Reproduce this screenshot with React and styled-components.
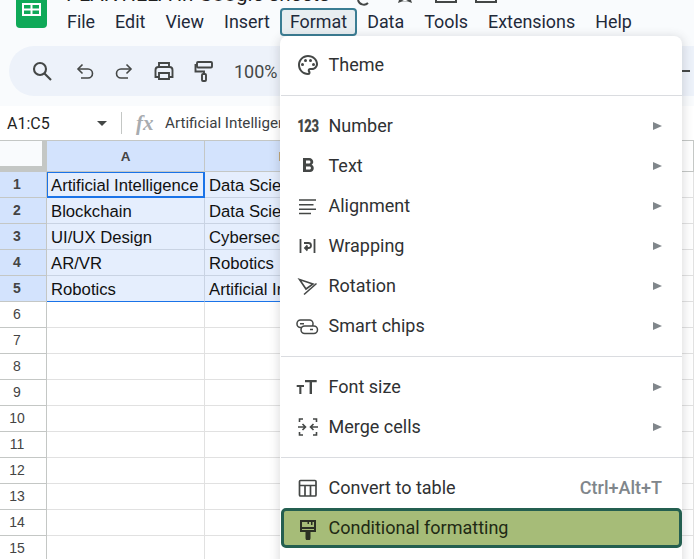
import React from "react";
import styled, { createGlobalStyle } from "styled-components";
import {
  MdOutlinePalette,
  MdFormatBold,
  MdArrowDropDown,
} from "react-icons/md";

const GlobalStyle = createGlobalStyle`
  html, body {
    margin: 0;
    padding: 0;
    background: #fff;
  }
  body {
    font-family: Roboto, "Liberation Sans", sans-serif;
  }
`;

const Page = styled.div`
  position: relative;
  width: 694px;
  height: 559px;
  overflow: hidden;
  background: #fff;
`;

const Header = styled.header`
  height: 46px;
  background: #f9fbfd;
  display: flex;
  padding-left: 16px;
  overflow: hidden;
`;

const Logo = styled.svg`
  width: 31px;
  height: 28px;
  flex: none;
`;

const TitleColumn = styled.div`
  margin-left: 19px;
  display: flex;
  flex-direction: column;
  flex: 1;
`;

const TitleRow = styled.div`
  display: flex;
  align-items: flex-end;
  height: 6px;
  overflow: hidden;
`;

const DocTitle = styled.div`
  flex: none;
  font-size: 20.6px;
  line-height: 28px;
  margin-bottom: -2px;
  color: #1f1f1f;
  white-space: nowrap;
`;

const TitleIcons = styled.svg`
  flex: none;
  width: 160px;
  height: 6px;
  margin-left: 26px;
`;

const MenuBar = styled.nav`
  display: flex;
  height: 28px;
  margin-top: 2px;
  margin-left: -9px;
  align-items: center;
`;

const MenuLabel = styled.div`
  box-sizing: border-box;
  height: 28px;
  line-height: ${(p) => (p.$active ? "24px" : "28px")};
  font-size: 17.9px;
  color: #1f2a3a;
  padding: 0 ${(p) => (p.$active ? "8px" : "10px")};
  white-space: nowrap;
  ${(p) =>
    p.$active &&
    `
    background: #e8eef1;
    border: 2px solid #3a7d93;
    border-radius: 4px;
  `}
`;

const ToolbarBand = styled.div`
  height: 60px;
  background: #f9fbfd;
  padding-left: 9px;
`;

const Toolbar = styled.div`
  height: 50px;
  background: #edf2fa;
  border-radius: 25px 0 0 25px;
  display: flex;
  align-items: center;
  color: #444746;
  padding-left: 21px;
  position: relative;
`;

const ToolIcon = styled.span`
  display: flex;
  width: 24px;
  justify-content: center;
  margin-right: ${(p) => p.$gap}px;
`;

const Zoom = styled.span`
  font-size: 18px;
  color: #444746;
  flex: 1;
`;

const Dash = styled.span`
  width: 8px;
  height: 2px;
  background: #444746;
  margin-right: 4px;
`;

const FormulaBar = styled.div`
  height: 34px;
  display: flex;
  align-items: center;
  background: #fff;
  padding-left: 7px;
  color: #444746;
  border-bottom: 1px solid #c4c7c5;
`;

const NameBox = styled.div`
  width: 83px;
  font-size: 16px;
  color: #1f1f1f;
`;

const NameCaret = styled.span`
  display: flex;
  font-size: 24px;
  width: 24px;
  color: #444746;
  margin-right: 7px;
`;

const Separator = styled.div`
  width: 1px;
  height: 22px;
  background: #c4c7c5;
  margin-right: 14px;
`;

const Fx = styled.span`
  font-family: "Liberation Serif", serif;
  font-style: italic;
  font-weight: 700;
  font-size: 21px;
  color: #a8acb0;
  width: 29px;
`;

const FormulaText = styled.span`
  font-size: 15.2px;
  color: #3c4043;
  white-space: nowrap;
`;

const GridRow = styled.div`
  display: grid;
  grid-template-columns: 47px 158px 158px 158px 1fr;
  height: ${(p) => p.$height || 26}px;
  box-sizing: border-box;
`;

const Corner = styled.div`
  box-sizing: border-box;
  background: #f9fbfd;
  border-right: 5px solid #c4c7c5;
  border-bottom: 6px solid #c4c7c5;
`;

const ColHead = styled.div`
  box-sizing: border-box;
  display: flex;
  align-items: center;
  justify-content: center;
  font-family: "Liberation Sans", sans-serif;
  font-size: 13.5px;
  font-weight: 700;
  color: #444;
  background: ${(p) => (p.$selected ? "#d3e3fd" : "#fff")};
  border-right: 1px solid #c4c7c5;
  border-bottom: 1px solid #c4c7c5;
`;

const RowHead = styled.div`
  box-sizing: border-box;
  font-family: "Liberation Sans", sans-serif;
  font-size: 14px;
  font-weight: ${(p) => (p.$selected ? 700 : 400)};
  line-height: 25px;
  color: #444;
  padding-right: 12px;
  text-align: center;
  background: ${(p) => (p.$selected ? "#d3e3fd" : "#fff")};
  border-right: 1px solid #c4c7c5;
  border-bottom: 1px solid #c4c7c5;
`;

const Cell = styled.div`
  box-sizing: border-box;
  font-family: "Liberation Sans", sans-serif;
  font-size: 16.7px;
  line-height: 27px;
  padding-left: 4px;
  color: #111;
  white-space: nowrap;
  overflow: hidden;
  background: ${(p) => (p.$selected ? "#e5eefd" : "#fff")};
  border-right: 1px solid ${(p) => (p.$selected ? "#c9d3e3" : "#e1e1e1")};
  border-bottom: 1px solid ${(p) => (p.$selected ? "#c9d3e3" : "#e1e1e1")};
  ${(p) => p.$last && "border-bottom: 1px solid #1a73e8;"}
  ${(p) =>
    p.$active &&
    `
    border: 1px solid #1a73e8;
    border-width: 1px 2px 2px 1px;
    padding-left: 3px;
    line-height: 25px;
  `}
`;

const Menu = styled.div`
  position: absolute;
  left: 280px;
  top: 36px;
  width: 402px;
  height: 540px;
  box-sizing: border-box;
  padding-top: 9px;
  background: #fff;
  border-radius: 8px;
  box-shadow: 0 2px 10px 2px rgba(60, 64, 67, 0.16);
`;

const Item = styled.div`
  box-sizing: border-box;
  display: flex;
  align-items: center;
  height: 40px;
  margin-left: 1px;
  padding: 0 20px 0 15px;
  font-size: 18px;
  color: #2f3133;
  ${(p) =>
    p.$highlight &&
    `
    background: #a6bc78;
    border: 3px solid #245f50;
    border-radius: 5px;
    padding: 0 17px 0 12px;
    color: #1f2a14;
  `}
`;

const ItemIcon = styled.span`
  width: 24px;
  height: 24px;
  display: flex;
  align-items: center;
  justify-content: center;
  margin-right: 8.5px;
  font-size: 24px;
  color: #444746;
  svg {
    display: block;
  }
`;

const NumberGlyph = styled.span`
  font-weight: 900;
  font-size: 18px;
  line-height: 24px;
  color: #444746;
  transform: scaleX(0.72);
  letter-spacing: -0.5px;
`;

const ItemLabel = styled.span`
  flex: 1;
  padding-bottom: 2px;
  white-space: nowrap;
`;

const Arrow = styled.span`
  width: 0;
  height: 0;
  border-left: 9px solid #80868b;
  border-top: 4.5px solid transparent;
  border-bottom: 4.5px solid transparent;
`;

const Shortcut = styled.span`
  padding-bottom: 2px;
  font-weight: 500;
  color: #80868b;
`;

const Divider = styled.hr`
  border: 0;
  height: 1px;
  background: #dadce0;
  margin: 10px 0 10px 1px;
`;

const Glyph = ({ children, width = 1.6 }) => (
  <svg width="24" height="24" viewBox="0 0 24 24" fill="none" stroke="#444746" strokeWidth={width}>
    {children}
  </svg>
);

const SearchIcon = () => (
  <Glyph width={2.1}>
    <circle cx="10" cy="10" r="6" />
    <path d="M14.500 14.500 21 21" />
  </Glyph>
);

const UndoIcon = () => (
  <Glyph>
    <path d="M5.500 10H15a4.500 4.500 0 0 1 0 9H8" />
    <path d="M9.500 5.500 5 10l4.500 4.500" />
  </Glyph>
);

const RedoIcon = () => (
  <Glyph>
    <path d="M18.500 10H9a4.500 4.500 0 0 0 0 9h7" />
    <path d="M14.500 5.500 19 10l-4.500 4.500" />
  </Glyph>
);

const PrintIcon = () => (
  <Glyph width={1.9}>
    <path d="M7 8V4h10v4" />
    <path d="M7 18H3.500v-7a3 3 0 0 1 3-3h11a3 3 0 0 1 3 3v7H17" />
    <path d="M7 14h10v6H7Z" />
  </Glyph>
);

const RollerIcon = () => (
  <Glyph width={1.9}>
    <rect x="5" y="3" width="15" height="5.500" rx="1" />
    <path d="M5 6H3.500v6.500H12V15" />
    <rect x="10" y="15" width="4" height="7" rx="1" />
  </Glyph>
);

const AlignIcon = () => (
  <Glyph>
    <path d="M3 6h17M3 10.700h14.500M3 15.200h17M3 19.500h12" />
  </Glyph>
);

const WrapIcon = () => (
  <Glyph width={1.8}>
    <path d="M4.500 5v14M18.500 5v14" />
    <path d="M8 9h4.500a2.500 2.500 0 0 1 0 5H9.500" />
    <path d="M11.500 11.500 9 14l2.500 2.500" />
  </Glyph>
);

const RotationIcon = () => (
  <Glyph>
    <path d="M3.500 5.500 17 10l-7 5Z" />
    <path d="M8 20.500 20.500 9.500" />
  </Glyph>
);

const ChipsIcon = () => (
  <Glyph width={1.5}>
    <rect x="1" y="6" width="16" height="7.500" rx="3.500" />
    <rect x="5" y="12" width="16.500" height="7.500" rx="3.700" fill="#fff" />
    <path d="M4 9.700h4M14 15.500h3" />
  </Glyph>
);

const SizeIcon = () => (
  <svg width="24" height="24" viewBox="0 0 24 24" fill="#444746">
    <path d="M9 5h11.700v2.300h-4.700V19h-2.400V7.300H9Z" />
    <path d="M.7 10H8v1.900H5.400V19H3.300v-7.100H.7Z" />
  </svg>
);

const MergeIcon = () => (
  <Glyph>
    <path d="M7 4H3.500v3M17 4h3.500v3M7 20H3.500v-3M17 20h3.500v-3" />
    <path d="M2 12h7M6.500 9 9.500 12 6.500 15M22 12h-7M17.500 9 14.500 12 17.500 15" />
  </Glyph>
);

const TableIcon = () => (
  <Glyph width={1.7}>
    <rect x="3.500" y="4.500" width="16.500" height="15.500" rx="1" />
    <path d="M3.500 9.500h16.500M9 9.500V20M14.500 9.500V20" />
  </Glyph>
);

const BrushIcon = () => (
  <svg width="24" height="24" viewBox="0 0 24 24">
    <path
      fillRule="evenodd"
      fill="#2b2f24"
      d="M4 4h16v12h-5.500v6a2.500 2.500 0 0 1-5 0v-6H4ZM6 6v5h12V6h-1.500v3H15V6h-2v2h-1.500V6ZM6 13v1h12v-1Z"
    />
  </svg>
);

const rows = [
  ["Artificial Intelligence", "Data Science"],
  ["Blockchain", "Data Science"],
  ["UI/UX Design", "Cybersecurity"],
  ["AR/VR", "Robotics"],
  ["Robotics", "Artificial Intelligence"],
];

function App() {
  return (
    <Page>
      <GlobalStyle />
      <Header>
        <Logo viewBox="0 0 31 28">
          <path d="M0 0h31v24a4 4 0 0 1-4 4H4a4 4 0 0 1-4-4Z" fill="#0fa958" />
          <path d="M6 3h19v13H6Z" fill="#fff" />
          <path d="M8 5h6.500v3.500H8ZM16.500 5H23v3.500h-6.500ZM8 10.500h6.500V14H8ZM16.500 10.500H23V14h-6.500Z" fill="#0fa958" />
        </Logo>
        <TitleColumn>
          <TitleRow>
            <DocTitle>PLANTILLA in Google sheets</DocTitle>
            <TitleIcons viewBox="0 0 160 6">
              <path d="M2 0a6 6 0 0 0 10 3" fill="none" stroke="#444746" strokeWidth="2" />
              <path d="M42 3 43 0h3l3 1.500L52 0h3l1 3-4-1.500-3-.5-3 .5Z" fill="#444746" />
              <path d="M80 0v2h20V0" fill="none" stroke="#444746" strokeWidth="2" />
              <path d="M120 0v2h20V0" fill="none" stroke="#444746" strokeWidth="2" />
            </TitleIcons>
          </TitleRow>
          <MenuBar>
            <MenuLabel>File</MenuLabel>
            <MenuLabel>Edit</MenuLabel>
            <MenuLabel>View</MenuLabel>
            <MenuLabel>Insert</MenuLabel>
            <MenuLabel $active>Format</MenuLabel>
            <MenuLabel>Data</MenuLabel>
            <MenuLabel>Tools</MenuLabel>
            <MenuLabel>Extensions</MenuLabel>
            <MenuLabel>Help</MenuLabel>
          </MenuBar>
        </TitleColumn>
      </Header>
      <ToolbarBand>
        <Toolbar>
          <ToolIcon $gap={19}><SearchIcon /></ToolIcon>
          <ToolIcon $gap={15}><UndoIcon /></ToolIcon>
          <ToolIcon $gap={16}><RedoIcon /></ToolIcon>
          <ToolIcon $gap={16}><PrintIcon /></ToolIcon>
          <ToolIcon $gap={18}><RollerIcon /></ToolIcon>
          <Zoom>100%</Zoom>
          <Dash />
        </Toolbar>
      </ToolbarBand>
      <FormulaBar>
        <NameBox>A1:C5</NameBox>
        <NameCaret><MdArrowDropDown /></NameCaret>
        <Separator />
        <Fx>fx</Fx>
        <FormulaText>Artificial Intelligence</FormulaText>
      </FormulaBar>
      <GridRow $height={31}>
        <Corner />
        <ColHead $selected>A</ColHead>
        <ColHead $selected>B</ColHead>
        <ColHead $selected>C</ColHead>
        <ColHead />
      </GridRow>
      {rows.map((row, i) => (
        <GridRow key={i}>
          <RowHead $selected>{i + 1}</RowHead>
          <Cell $selected $active={i === 0} $last={i === 4}>{row[0]}</Cell>
          <Cell $selected $last={i === 4}>{row[1]}</Cell>
          <Cell $selected $last={i === 4} />
          <Cell />
        </GridRow>
      ))}
      {Array.from({ length: 10 }, (_, i) => (
        <GridRow key={i}>
          <RowHead>{i + 6}</RowHead>
          <Cell />
          <Cell />
          <Cell />
          <Cell />
        </GridRow>
      ))}
      <Menu>
        <Item><ItemIcon><MdOutlinePalette /></ItemIcon><ItemLabel>Theme</ItemLabel></Item>
        <Divider />
        <Item><ItemIcon><NumberGlyph>123</NumberGlyph></ItemIcon><ItemLabel>Number</ItemLabel><Arrow /></Item>
        <Item><ItemIcon><MdFormatBold size={30} /></ItemIcon><ItemLabel>Text</ItemLabel><Arrow /></Item>
        <Item><ItemIcon><AlignIcon /></ItemIcon><ItemLabel>Alignment</ItemLabel><Arrow /></Item>
        <Item><ItemIcon><WrapIcon /></ItemIcon><ItemLabel>Wrapping</ItemLabel><Arrow /></Item>
        <Item><ItemIcon><RotationIcon /></ItemIcon><ItemLabel>Rotation</ItemLabel><Arrow /></Item>
        <Item><ItemIcon><ChipsIcon /></ItemIcon><ItemLabel>Smart chips</ItemLabel><Arrow /></Item>
        <Divider />
        <Item><ItemIcon><SizeIcon /></ItemIcon><ItemLabel>Font size</ItemLabel><Arrow /></Item>
        <Item><ItemIcon><MergeIcon /></ItemIcon><ItemLabel>Merge cells</ItemLabel><Arrow /></Item>
        <Divider />
        <Item><ItemIcon><TableIcon /></ItemIcon><ItemLabel>Convert to table</ItemLabel><Shortcut>Ctrl+Alt+T</Shortcut></Item>
        <Item $highlight><ItemIcon><BrushIcon /></ItemIcon><ItemLabel>Conditional formatting</ItemLabel></Item>
      </Menu>
    </Page>
  );
}

export default App;
